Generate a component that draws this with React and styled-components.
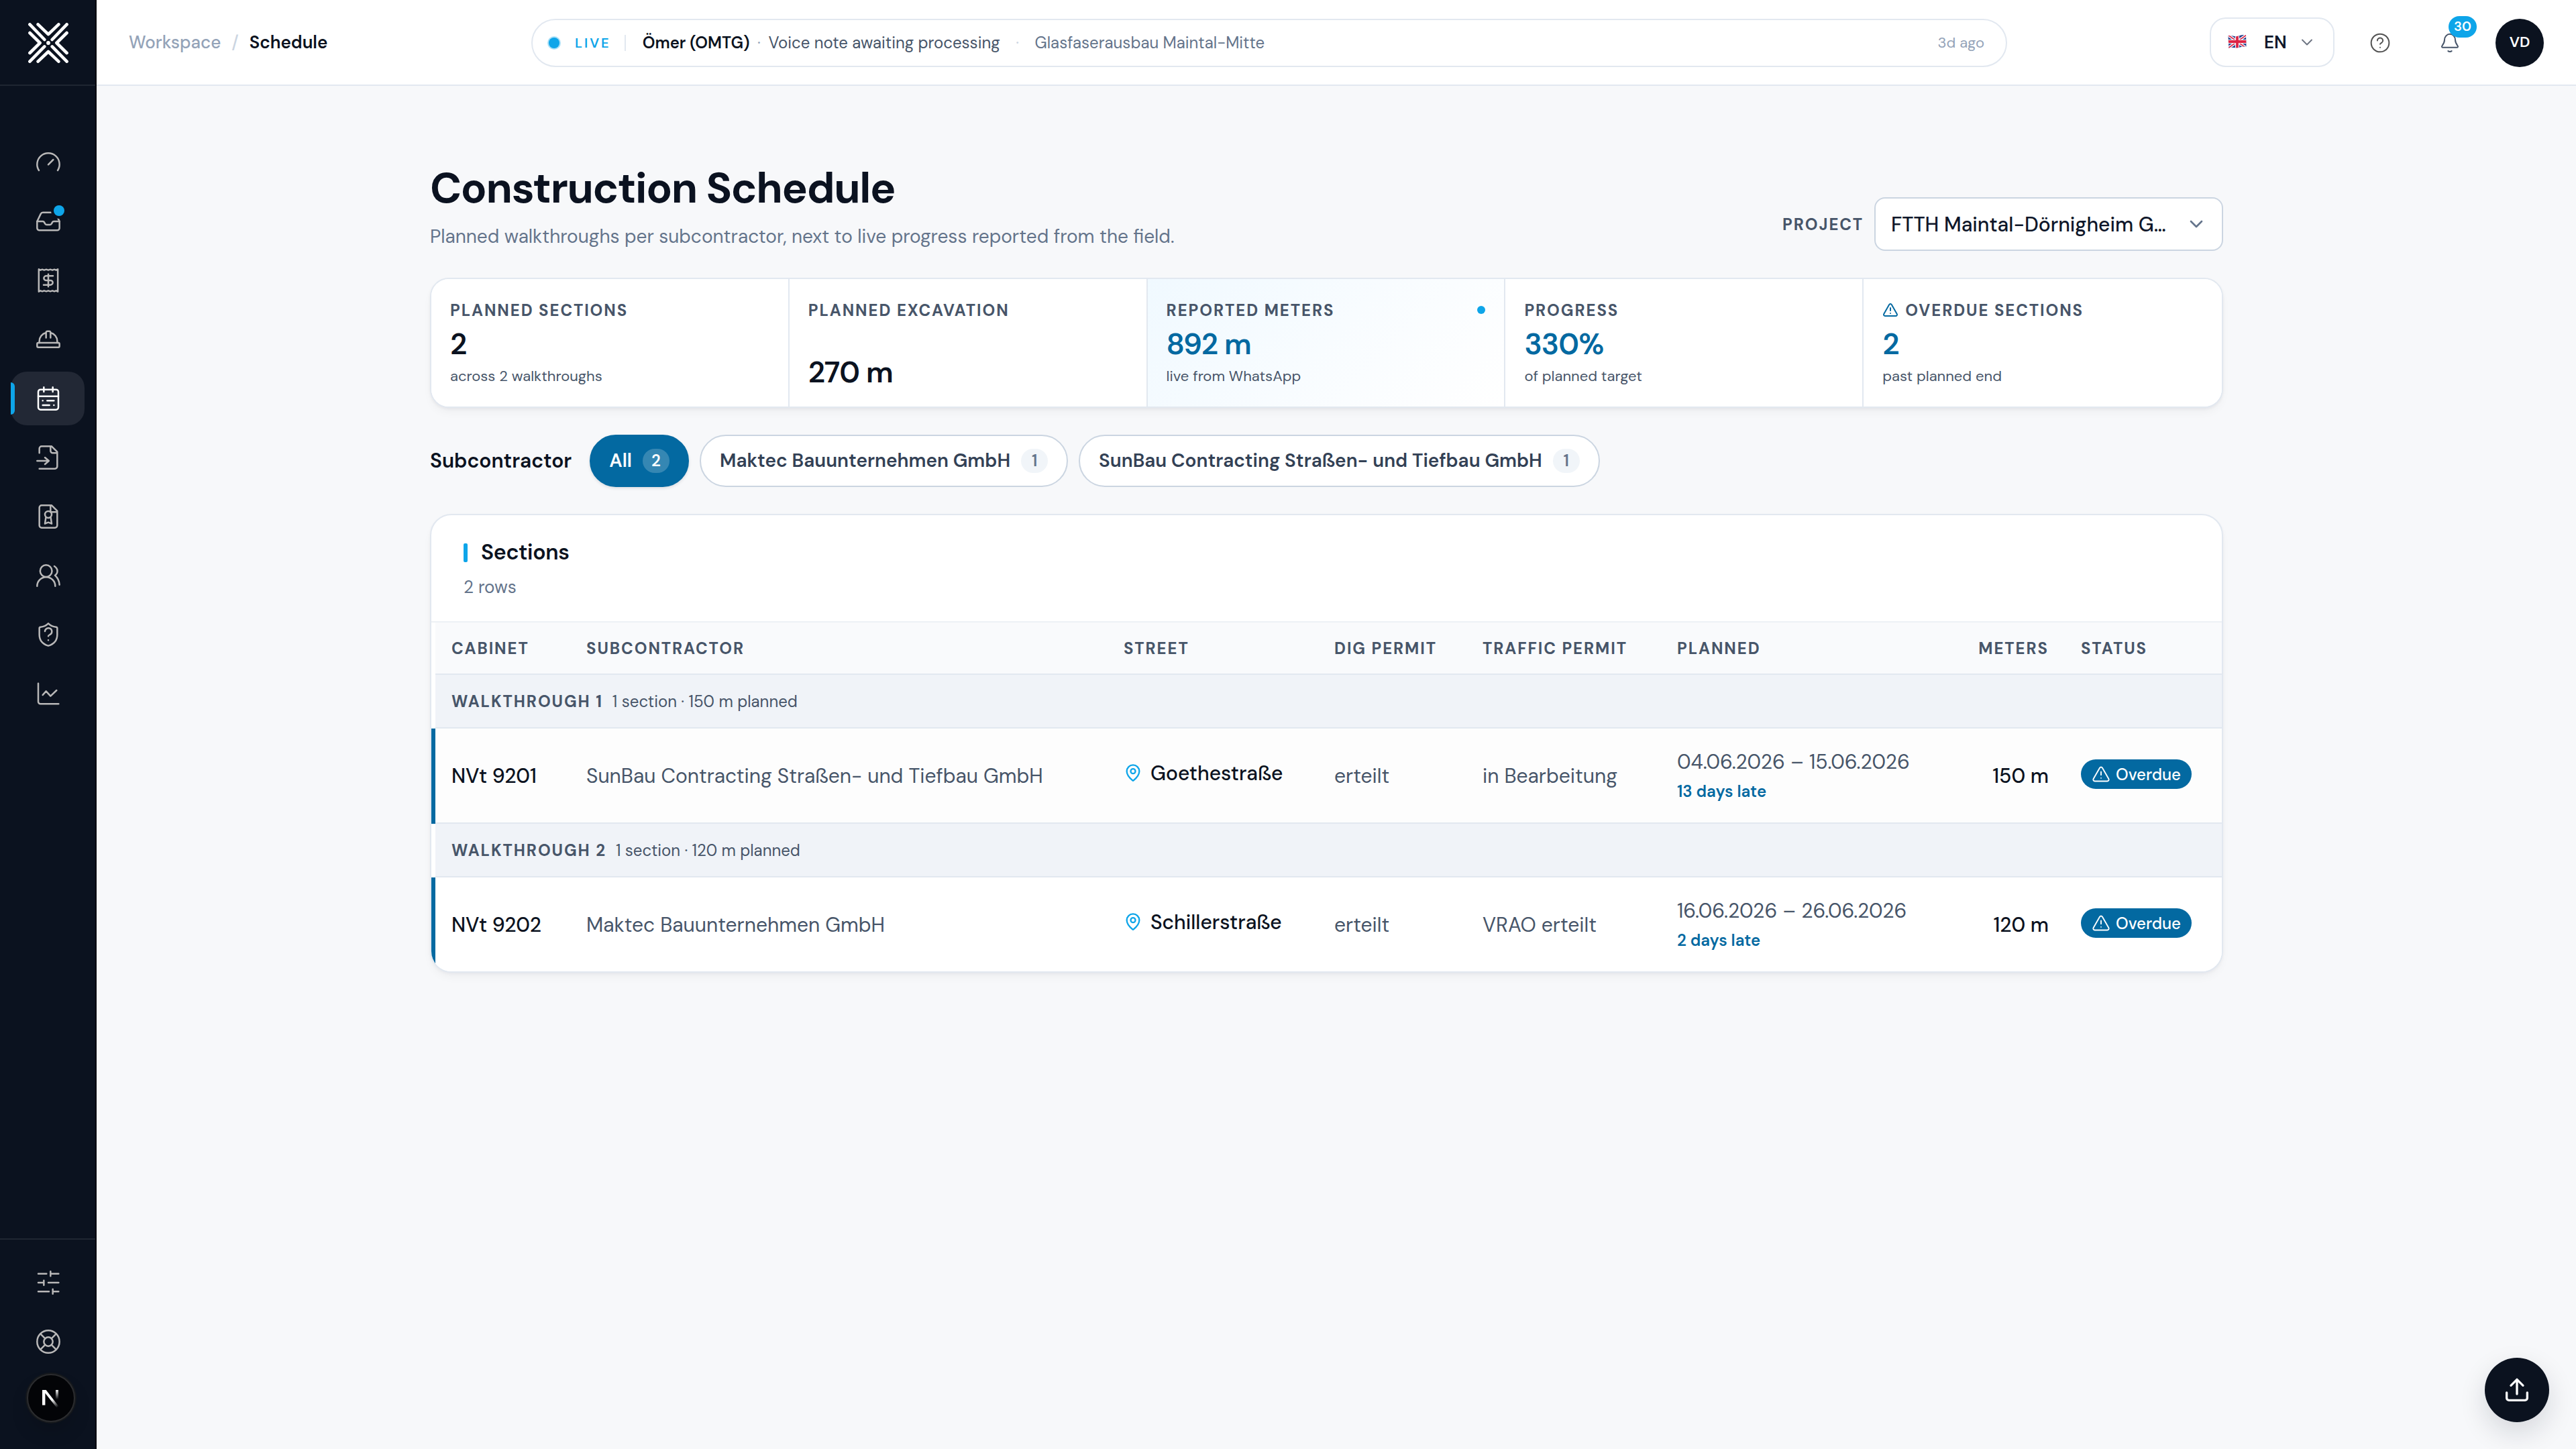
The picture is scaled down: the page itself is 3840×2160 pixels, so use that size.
import styled, { createGlobalStyle } from "styled-components"
import { ChevronDown, MapPin, TriangleAlert } from "lucide-react"

const GlobalStyle = createGlobalStyle`
	*, *::before, *::after {
		box-sizing: border-box;
	}

	body {
		margin: 0;
		background-color: #f7f8fa;
		color: #0b1220;
		font-family: "DM Sans", Inter, "Open Sans", sans-serif;
		-webkit-font-smoothing: antialiased;
	}

	h1, h2, p {
		margin: 0;
	}
`

const Layout = styled.div`
	display: flex;
	height: 100vh;
	overflow: hidden;
`

/* ---------- sidebar ---------- */

const Sidebar = styled.aside`
	display: flex;
	flex-direction: column;
	flex: none;
	width: 144px;
	background-color: #0b121f;
	border-right: 2px solid #04070d;
`

const LogoBox = styled.div`
	display: flex;
	justify-content: center;
	align-items: center;
	height: 128px;
	padding: 2px 0 0 2px;
	border-bottom: 2px solid #1f2632;
`

const Nav = styled.nav`
	display: flex;
	flex-direction: column;
	flex: 1;
	gap: 8px;
	padding: 74px 16px 0;
`

const NavFooter = styled.div`
	display: flex;
	flex-direction: column;
	gap: 8px;
	height: 314px;
	padding: 24px 16px 0;
	border-top: 2px solid #1f2632;
`

const NavItem = styled.a`
	position: relative;
	display: flex;
	justify-content: center;
	align-items: center;
	height: 80px;
	padding-left: 2px;
	border-radius: 24px;
	color: ${({ $active }) => ($active ? "#ffffff" : "#b9b8b8")};
	background-color: ${({ $active }) => ($active ? "#222835" : "transparent")};
`

const ActiveBar = styled.span`
	position: absolute;
	left: 0;
	top: 16px;
	width: 6px;
	height: 48px;
	border-radius: 0 6px 6px 0;
	background-color: #0ea5e9;
`

const UnreadDot = styled.span`
	position: absolute;
	right: 30px;
	top: 16px;
	width: 16px;
	height: 16px;
	border-radius: 50%;
	background-color: #0ea5e9;
	box-shadow: 0 0 0 4px #0b121f;
`

const DevBadge = styled.div`
	position: fixed;
	left: 40px;
	bottom: 40px;
	display: flex;
	justify-content: center;
	align-items: center;
	width: 72px;
	height: 72px;
	border-radius: 50%;
	border: 2px solid #2b2c2f;
	background-color: #030407;
	box-shadow: 0 0 0 2px #15181c, 0 16px 32px -8px rgba(0, 0, 0, 0.24);
`

/* ---------- top bar ---------- */

const Page = styled.div`
	display: flex;
	flex-direction: column;
	flex: 1;
	min-width: 0;
`

const TopBar = styled.header`
	display: grid;
	grid-template-columns: 648px 2200px 1fr;
	align-items: center;
	height: 128px;
	background-color: #ffffff;
	box-shadow: inset 0 -2px 0 #e2e8f0;
`

const Breadcrumb = styled.div`
	display: flex;
	gap: 16px;
	padding: 0 0 2px 48px;
	font-size: 26px;
	font-weight: 500;
	color: #94a3b8;
`

const Slash = styled.span`
	color: #cbd5e1;
`

const Current = styled.span`
	font-weight: 600;
	color: #0b1220;
`

const LivePill = styled.div`
	display: flex;
	align-items: center;
	height: 72px;
	padding: 0 32px 1px 24px;
	border: 2px solid #e2e8f0;
	border-radius: 36px;
	font-size: 24px;
	color: #475569;
`

const LiveDot = styled.span`
	width: 16px;
	height: 16px;
	border-radius: 50%;
	background-color: #0ea5e9;
	box-shadow: 0 0 0 2px rgba(14, 165, 233, 0.35);
`

const LiveLabel = styled.span`
	margin: 0 20px 0 23px;
	font-size: 20px;
	font-weight: 600;
	letter-spacing: 3px;
	color: #0ea5e9;
`

const Separator = styled.span`
	width: 2px;
	height: 24px;
	margin-right: 25px;
	background-color: #e2e8f0;
`

const Author = styled.span`
	font-weight: 600;
	color: #0b1220;
`

const Middot = styled.span`
	width: 6px;
	margin: 0 ${({ $gap }) => $gap}px;
	display: flex;
	justify-content: center;
	color: ${({ $light }) => ($light ? "#cbd5e1" : "#94a3b8")};
`

const Muted = styled.span`
	color: #64748b;
`

const Ago = styled.span`
	margin-left: auto;
	font-size: 22px;
	color: #94a3b8;
`

const Actions = styled.div`
	display: flex;
	justify-content: flex-end;
	align-items: center;
	gap: 32px;
	padding-right: 48px;
`

const Language = styled.button`
	display: flex;
	align-items: center;
	width: 186px;
	height: 74px;
	margin: 0 0 2px;
	padding: 0 0 0 25px;
	border: 2px solid #e2e8f0;
	border-radius: 24px;
	background-color: #ffffff;
	font: 600 26px "DM Sans", Inter, sans-serif;
	color: #0f172a;

	span {
		margin: 0 16px 0 26px;
	}
`

const IconButton = styled.div`
	position: relative;
	display: flex;
	justify-content: center;
	align-items: center;
	width: 72px;
	height: 72px;
	color: ${({ $color }) => $color};
`

const CountBadge = styled.span`
	position: absolute;
	left: 34px;
	top: -4px;
	display: flex;
	justify-content: center;
	align-items: center;
	width: 42px;
	height: 32px;
	padding-bottom: 2px;
	border-radius: 16px;
	background-color: #0ea5e9;
	font-size: 20px;
	font-weight: 600;
	color: #ffffff;
`

const Avatar = styled.div`
	display: flex;
	justify-content: center;
	align-items: center;
	width: 72px;
	height: 72px;
	padding-bottom: 3px;
	border-radius: 50%;
	background-color: #0b121f;
	font-size: 22px;
	font-weight: 600;
	color: #ffffff;
`

/* ---------- content ---------- */

const Content = styled.main`
	display: flex;
	flex-direction: column;
	gap: 40px;
	width: 2673px;
	margin: 114px 0 0 497px;
`

const PageHeader = styled.div`
	display: flex;
	justify-content: space-between;
	align-items: flex-end;
	height: 132px;
`

const Heading = styled.div`
	display: flex;
	flex-direction: column;
	align-self: flex-start;
	gap: 13px;
	padding-top: 1px;
`

const Title = styled.h1`
	font-size: 64px;
	font-weight: 700;
	line-height: 76px;
	letter-spacing: -0.0215em;
`

const Subtitle = styled.p`
	font-size: 28px;
	line-height: 41px;
	color: #64748b;
`

const ProjectPicker = styled.div`
	display: flex;
	align-items: center;
	gap: 16px;
`

const Caps = styled.span`
	font-size: 24px;
	font-weight: 700;
	letter-spacing: 0.08em;
	text-transform: uppercase;
	color: #475569;
`

const Select = styled.div`
	display: flex;
	justify-content: space-between;
	align-items: center;
	width: 520px;
	height: 80px;
	padding: 0 22px 0 23px;
	border: 2px solid #cbd5e1;
	border-radius: 16px;
	background-color: #ffffff;
	font-size: 30px;
	font-weight: 500;
	white-space: nowrap;
	color: #0f172a;

	svg {
		color: #64748b;
	}
`

const Stats = styled.section`
	display: grid;
	grid-template-columns: repeat(5, 1fr);
	height: 194px;
	border: 2px solid #e2e8f0;
	border-radius: 28px;
	background-color: #ffffff;
	overflow: hidden;
	box-shadow: 0 2px 4px rgba(15, 23, 42, 0.05), 0 8px 16px -4px rgba(15, 23, 42, 0.05);
`

const Stat = styled.div`
	display: flex;
	flex-direction: column;
	justify-content: space-between;
	padding: 28px;
	border-right: 2px solid #e2e8f0;
	background: ${({ $live }) => ($live ? "linear-gradient(135deg, #f0f9ff 0%, #f8fcff 50%, #ffffff 100%)" : "#ffffff")};

	&:last-child {
		border-right: none;
	}
`

const StatLabel = styled.div`
	display: flex;
	align-items: center;
	gap: 10px;
	height: 36px;
	color: #0369a1;
`

const StatDot = styled.span`
	width: 12px;
	height: 12px;
	margin-left: auto;
	border-radius: 50%;
	background-color: #0ea5e9;
`

const StatValue = styled.div`
	font-size: 44px;
	font-weight: 600;
	line-height: 46px;
	letter-spacing: -0.02em;
	color: ${({ $accent }) => ($accent ? "#0369a1" : "#0b1220")};
`

const StatHint = styled.div`
	margin-top: 8px;
	font-size: 22px;
	line-height: 34px;
	color: #475569;
`

const Filters = styled.div`
	display: flex;
	align-items: center;
	gap: 16px;
	height: 78px;
`

const FilterLabel = styled.span`
	margin-right: 11px;
	padding-bottom: 1px;
	font-size: 30px;
	font-weight: 600;
`

const Chip = styled.button`
	display: flex;
	align-items: center;
	gap: 16px;
	height: 78px;
	padding: 0 ${({ $selected }) => ($selected ? 27 : 28)}px 1px;
	border: 2px solid ${({ $selected }) => ($selected ? "#0369a1" : "#cbd5e1")};
	border-radius: 39px;
	background-color: ${({ $selected }) => ($selected ? "#0369a1" : "#ffffff")};
	font: 600 28px "DM Sans", Inter, sans-serif;
	color: ${({ $selected }) => ($selected ? "#ffffff" : "#334155")};
	box-shadow: ${({ $selected }) => ($selected ? "0 2px 4px rgba(15, 23, 42, 0.12)" : "none")};
`

const ChipCount = styled.span`
	display: flex;
	justify-content: center;
	align-items: center;
	min-width: 40px;
	height: 36px;
	border-radius: 18px;
	background-color: ${({ $selected }) => ($selected ? "rgba(255, 255, 255, 0.2)" : "#f1f5f9")};
	font-size: 24px;
	font-weight: 600;
	color: ${({ $selected }) => ($selected ? "#ffffff" : "#64748b")};
`

/* ---------- table ---------- */

const Card = styled.section`
	border: 2px solid #e2e8f0;
	border-radius: 32px;
	background-color: #ffffff;
	overflow: hidden;
	box-shadow: 0 2px 4px rgba(15, 23, 42, 0.04), 0 8px 16px -4px rgba(15, 23, 42, 0.05);
`

const CardHeader = styled.div`
	display: flex;
	flex-direction: column;
	gap: 13px;
	height: 160px;
	padding: 36px 48px 0;
	border-bottom: 2px solid #edf1f5;
`

const CardTitle = styled.h2`
	display: flex;
	align-items: center;
	gap: 20px;
	font-size: 32px;
	font-weight: 600;
	line-height: 39px;
	letter-spacing: -0.01em;

	&::before {
		content: "";
		width: 6px;
		height: 28px;
		border-radius: 2px;
		background-color: #0ea5e9;
	}
`

const RowCount = styled.p`
	font-size: 26px;
	line-height: 38px;
	color: #64748b;
`

const Row = styled.div`
	display: grid;
	grid-template-columns: 201px 801px 314px 221px 290px 400px 202px 1fr;
	height: ${({ $height }) => $height}px;
	border-left: 6px solid ${({ $late }) => ($late ? "#0369a1" : "#ffffff")};
	background-color: ${({ $bg }) => $bg};
	box-shadow: ${({ $last }) => ($last ? "none" : "inset 0 -2px 0 #e2e8f0")};
	background-clip: padding-box;
`

const Cell = styled.div`
	display: flex;
	align-items: center;
	justify-content: ${({ $right }) => ($right ? "flex-end" : "flex-start")};
	gap: 12px;
	padding: 0 24px ${({ $lift }) => $lift || 0}px;
	font-size: 30px;
	font-weight: ${({ $strong }) => ($strong ? 500 : 400)};
	white-space: nowrap;
	color: ${({ $strong }) => ($strong ? "#0b1220" : "#475569")};
`

const GroupRow = styled.div`
	display: flex;
	align-items: center;
	gap: 14px;
	height: 80px;
	padding: 0 24px 2px;
	border-left: 6px solid #ffffff;
	background-color: #f0f3f8;
	background-clip: padding-box;
	box-shadow: inset 0 -2px 0 #e2e8f0;
	font-size: 24px;
	color: #475569;
`

const Dates = styled.div`
	display: flex;
	flex-direction: column;
	gap: 4px;
	line-height: 44px;
`

const Late = styled.span`
	font-size: 24px;
	font-weight: 600;
	line-height: 36px;
	color: #0369a1;
`

const StatusPill = styled.span`
	display: flex;
	align-items: center;
	gap: 8px;
	height: 44px;
	padding: 0 16px;
	border-radius: 22px;
	background-color: #0369a1;
	font-size: 24px;
	font-weight: 500;
	color: #ffffff;
`

const UploadButton = styled.button`
	position: fixed;
	right: 40px;
	bottom: 40px;
	display: flex;
	justify-content: center;
	align-items: center;
	width: 96px;
	height: 96px;
	border: none;
	border-radius: 50%;
	background-color: #0b121f;
	color: #ffffff;
	box-shadow: 0 16px 40px rgba(15, 23, 42, 0.14);
`

const icons = {
	gauge: ["M3.6 19.2A10 10 0 1 1 20.4 19.2", "M12 14L16.4 9.6"],
	inbox: [
		"M2 12L5.3 5.2A2 2 0 0 1 7.1 4H16.9A2 2 0 0 1 18.7 5.2L22 12V18A2 2 0 0 1 20 20H4A2 2 0 0 1 2 18Z",
		"M2 12H7C7.8 12 8.2 12.4 8.5 13L9 14C9.3 14.7 9.8 15 10.5 15H13.5C14.2 15 14.7 14.7 15 14L15.5 13C15.8 12.4 16.2 12 17 12H22",
	],
	receipt: [
		"M3.5 2V22L5 21.2L6.6 21.8L8.3 21.2L10.2 21.8L12 21.2L13.8 21.8L15.7 21.2L17.4 21.8L19 21.2L20.5 22V2L19 2.8L17.4 2.2L15.7 2.8L13.8 2.2L12 2.8L10.2 2.2L8.3 2.8L6.6 2.2L5 2.8Z",
		"M16.2 8H10.2A2.2 2 0 0 0 10.2 12H13.9A2.1 2 0 0 1 13.9 16H7.8M12 6.5V17.5",
	],
	helmet: [
		"M3 15H21A1 1 0 0 1 22 16V18A1 1 0 0 1 21 19H3A1 1 0 0 1 2 18V16A1 1 0 0 1 3 15Z",
		"M4 15V13.5A8 7.8 0 0 1 10 6M20 15V13.5A8 7.8 0 0 0 14 6",
		"M10 10.5V5.8A1.2 1.2 0 0 1 11.2 4.7H12.8A1.2 1.2 0 0 1 14 5.8V10.5",
	],
	calendar: [
		"M5 4H19A2 2 0 0 1 21 6V20A2 2 0 0 1 19 22H5A2 2 0 0 1 3 20V6A2 2 0 0 1 5 4Z",
		"M3 10H21M8 2V6M16 2V6M7 14H7.01M11 14H17M7 18H13M17 18H17.01",
	],
	fileImport: [
		"M4 8V4A2 2 0 0 1 6 2H15L20 7V20A2 2 0 0 1 18 22H4",
		"M14 2.5V6A2 2 0 0 0 16 8H19.5",
		"M2 15H12.5M9 12L12.5 15L9 18",
	],
	certificate: [
		"M15 2H6A2 2 0 0 0 4 4V20A2 2 0 0 0 6 22H18A2 2 0 0 0 20 20V7Z",
		"M14 2.5V8H19.5",
		"M12 7.2A3 3 0 1 1 12 13.2A3 3 0 1 1 12 7.2Z",
		"M9.8 13L9 18.4L12 17.2L15 18.4L14.2 13",
	],
	users: [
		"M10 2.6A5.3 5.3 0 1 1 10 13.2A5.3 5.3 0 1 1 10 2.6Z",
		"M2 21.4A8.1 8.1 0 0 1 18.2 21.4",
		"M17.4 3.6C20.8 5.8 21 9.6 18 11.8C20.4 14 21.8 16.8 22 20.2",
	],
	shield: [
		"M12 2C14 4 16.5 5 19 5.2C19.7 5.3 20 5.7 20 6.2V12C20 17 17 20.5 12 22C7 20.5 4 17 4 12V6.2C4 5.7 4.3 5.3 5 5.2C7.5 5 10 4 12 2Z",
		"M9 9A3.1 3.1 0 1 1 13.8 11.8C12.8 12.4 12 12.8 12 13.4M12 17H12.01",
	],
	chart: ["M3 2.8V19.2A2 2 0 0 0 5 21.2H21.2", "M7 13.2L10 9.8L14 14.2L19.4 9"],
	sliders: ["M3 4H10.4M14 4H21.2M14 2V6.2M3 12H8M8 10V14.2M12 12H21.2M3 20H12.6M16 20H21.2M16 17.8V22"],
	lifebuoy: [
		"M12 2A10 10 0 1 1 12 22A10 10 0 1 1 12 2Z",
		"M12 8A4 4 0 1 1 12 16A4 4 0 1 1 12 8Z",
		"M5 5L9.2 9.2M19 5L14.8 9.2M5 19L9.2 14.8M19 19L14.8 14.8",
	],
	help: [
		"M12 2A10 10 0 1 1 12 22A10 10 0 1 1 12 2Z",
		"M8.9 9.3A3.1 2.9 0 1 1 13.9 11.6C12.8 12.3 12 12.7 12 13.4M12 17H12.01",
	],
	bell: [
		"M3.3 15.2C4.9 13.2 6 11.6 6 8.7A6 6.6 0 0 1 18 8.7C18 11.6 19.1 13.2 20.7 15.2C21.4 16.2 20.9 17 19.8 17H4.2C3.1 17 2.6 16.2 3.3 15.2Z",
		"M10 21C11 22.1 13 22.1 14 21",
	],
	upload: ["M12 2.6V15.6M6.6 8L12 2.6L17.4 8", "M2.8 14.4V19.2A2 2 0 0 0 4.8 21.2H19.2A2 2 0 0 0 21.2 19.2V14.4"],
}

const Icon = ({ name, size = 40, stroke = 1.5 }) => (
	<svg
		width={size}
		height={size}
		viewBox="0 0 24 24"
		fill="none"
		stroke="currentColor"
		strokeWidth={stroke}
		strokeLinecap="round"
		strokeLinejoin="round"
	>
		{icons[name].map(d => (
			<path key={d} d={d} />
		))}
	</svg>
)

const Logo = () => (
	<svg width="60" height="60" viewBox="0 0 60 60" fill="none" stroke="#ffffff" strokeWidth="4.6" strokeLinecap="round" strokeLinejoin="round">
		<path d="M2.4 2.4L24.3 25M57.6 2.4L35.7 25M2.4 57.6L24.3 35.4M57.6 57.6L35.7 35.4" />
		<path d="M14.6 2.4L30 17.2L45.4 2.4M14.6 57.6L30 43L45.4 57.6" />
		<path d="M2.4 15L17.6 30L2.4 45M57.6 15L42.4 30L57.6 45" />
		<circle cx="30" cy="30" r="2.9" fill="#ffffff" stroke="none" />
	</svg>
)

const DevLogo = () => (
	<svg width="26" height="30" viewBox="0 0 26 30" fill="none">
		<defs>
			<linearGradient id="diagonal" gradientUnits="userSpaceOnUse" x1="15" y1="17" x2="24" y2="28">
				<stop stopColor="#ffffff" />
				<stop offset="1" stopColor="#ffffff" stopOpacity="0" />
			</linearGradient>
			<linearGradient id="stem" gradientUnits="userSpaceOnUse" x1="0" y1="2" x2="0" y2="17">
				<stop stopColor="#ffffff" />
				<stop offset="1" stopColor="#ffffff" stopOpacity="0" />
			</linearGradient>
		</defs>
		<rect x="0" y="3" width="4.4" height="22.6" fill="#ffffff" />
		<path d="M0.5 3H5.6L25 28L22 30Z" fill="url(#diagonal)" />
		<rect x="20" y="3" width="4" height="16" fill="url(#stem)" />
	</svg>
)

const Flag = () => (
	<svg width="28" height="22" viewBox="0 0 28 22">
		<defs>
			<clipPath id="wave">
				<path d="M0.5 1.5C5 -0.2 9 3 14 2C19 1 23 -0.8 27 0.2L27.5 17.4C23 16.6 19 18.4 14.4 19.2C9.5 20 5.6 17.6 1.4 19.8Z" />
			</clipPath>
		</defs>
		<g clipPath="url(#wave)">
			<rect width="28" height="22" fill="#233f8c" />
			<path d="M0 0L28 20M28 0L0 20" stroke="#f4f3f6" strokeWidth="4.4" />
			<path d="M0 0L28 20M28 0L0 20" stroke="#dd2444" strokeWidth="1.6" />
			<path d="M14 0V22M0 10H28" stroke="#f4f3f6" strokeWidth="6.2" />
			<path d="M14 0V22M0 10H28" stroke="#dd2444" strokeWidth="3.8" />
		</g>
	</svg>
)

const navItems = [
	{ icon: "gauge" },
	{ icon: "inbox", unread: true },
	{ icon: "receipt" },
	{ icon: "helmet" },
	{ icon: "calendar", active: true },
	{ icon: "fileImport" },
	{ icon: "certificate" },
	{ icon: "users" },
	{ icon: "shield" },
	{ icon: "chart" },
]

const stats = [
	{ label: "Planned sections", value: "2", hint: "across 2 walkthroughs" },
	{ label: "Planned excavation", value: "270 m" },
	{ label: "Reported meters", value: "892 m", hint: "live from WhatsApp", accent: true, live: true },
	{ label: "Progress", value: "330%", hint: "of planned target", accent: true },
	{ label: "Overdue sections", value: "2", hint: "past planned end", accent: true, warn: true },
]

const subcontractors = [
	{ name: "All", count: 2, selected: true },
	{ name: "Maktec Bauunternehmen GmbH", count: 1 },
	{ name: "SunBau Contracting Straßen- und Tiefbau GmbH", count: 1 },
]

const columns = ["Cabinet", "Subcontractor", "Street", "Dig permit", "Traffic permit", "Planned", "Meters", "Status"]

const walkthroughs = [
	{
		title: "Walkthrough 1",
		summary: "1 section · 150 m planned",
		bg: "#fdfdfd",
		cabinet: "NVt 9201",
		subcontractor: "SunBau Contracting Straßen- und Tiefbau GmbH",
		street: "Goethestraße",
		dig: "erteilt",
		traffic: "in Bearbeitung",
		planned: "04.06.2026 – 15.06.2026",
		late: "13 days late",
		meters: "150 m",
	},
	{
		title: "Walkthrough 2",
		summary: "1 section · 120 m planned",
		bg: "#ffffff",
		cabinet: "NVt 9202",
		subcontractor: "Maktec Bauunternehmen GmbH",
		street: "Schillerstraße",
		dig: "erteilt",
		traffic: "VRAO erteilt",
		planned: "16.06.2026 – 26.06.2026",
		late: "2 days late",
		meters: "120 m",
	},
]

const SideNav = () => (
	<Sidebar>
		<LogoBox>
			<Logo />
		</LogoBox>
		<Nav>
			{navItems.map(item => (
				<NavItem key={item.icon} $active={item.active}>
					{item.active && <ActiveBar />}
					<Icon name={item.icon} />
					{item.unread && <UnreadDot />}
				</NavItem>
			))}
		</Nav>
		<NavFooter>
			<NavItem>
				<Icon name="sliders" />
			</NavItem>
			<NavItem>
				<Icon name="lifebuoy" />
			</NavItem>
		</NavFooter>
		<DevBadge>
			<DevLogo />
		</DevBadge>
	</Sidebar>
)

const Header = () => (
	<TopBar>
		<Breadcrumb>
			<span>Workspace</span>
			<Slash>/</Slash>
			<Current>Schedule</Current>
		</Breadcrumb>
		<LivePill>
			<LiveDot />
			<LiveLabel>LIVE</LiveLabel>
			<Separator />
			<Author>Ömer (OMTG)</Author>
			<Middot $gap={11}>·</Middot>
			<span>Voice note awaiting processing</span>
			<Middot $gap={23} $light>·</Middot>
			<Muted>Glasfaserausbau Maintal-Mitte</Muted>
			<Ago>3d ago</Ago>
		</LivePill>
		<Actions>
			<Language>
				<Flag />
				<span>EN</span>
				<ChevronDown size={28} strokeWidth={1.6} color="#6b7280" />
			</Language>
			<IconButton $color="#525252">
				<Icon name="help" size={32} />
			</IconButton>
			<IconButton $color="#475569">
				<Icon name="bell" size={32} />
				<CountBadge>30</CountBadge>
			</IconButton>
			<Avatar>VD</Avatar>
		</Actions>
	</TopBar>
)

const SectionRow = ({ item, last }) => {
	// every row but the last keeps 2px at the bottom for its divider
	const line = last ? 0 : 2

	return (
		<>
			<GroupRow>
				<Caps>{item.title}</Caps>
				<span>{item.summary}</span>
			</GroupRow>
			<Row $height={140 + line} $late $bg={item.bg} $last={last}>
				<Cell $strong $lift={line}>{item.cabinet}</Cell>
				<Cell $lift={line}>{item.subcontractor}</Cell>
				<Cell $strong $lift={line + 8}>
					<MapPin size={28} color="#0ea5e9" />
					{item.street}
				</Cell>
				<Cell $lift={line}>{item.dig}</Cell>
				<Cell $lift={line}>{item.traffic}</Cell>
				<Cell $lift={line}>
					<Dates>
						{item.planned}
						<Late>{item.late}</Late>
					</Dates>
				</Cell>
				<Cell $strong $right $lift={line}>{item.meters}</Cell>
				<Cell $lift={line + 4}>
					<StatusPill>
						<TriangleAlert size={28} strokeWidth={1.6} />
						Overdue
					</StatusPill>
				</Cell>
			</Row>
		</>
	)
}

export default function App() {
	return (
		<>
			<GlobalStyle />
			<Layout>
				<SideNav />
				<Page>
					<Header />
					<Content>
						<PageHeader>
							<Heading>
								<Title>Construction Schedule</Title>
								<Subtitle>Planned walkthroughs per subcontractor, next to live progress reported from the field.</Subtitle>
							</Heading>
							<ProjectPicker>
								<Caps>Project</Caps>
								<Select>
									FTTH Maintal-Dörnigheim G…
									<ChevronDown size={32} />
								</Select>
							</ProjectPicker>
						</PageHeader>
						<Stats>
							{stats.map(stat => (
								<Stat key={stat.label} $live={stat.live}>
									<StatLabel>
										{stat.warn && <TriangleAlert size={24} />}
										<Caps>{stat.label}</Caps>
										{stat.live && <StatDot />}
									</StatLabel>
									<div>
										<StatValue $accent={stat.accent}>{stat.value}</StatValue>
										{stat.hint && <StatHint>{stat.hint}</StatHint>}
									</div>
								</Stat>
							))}
						</Stats>
						<Filters>
							<FilterLabel>Subcontractor</FilterLabel>
							{subcontractors.map(({ name, count, selected }) => (
								<Chip key={name} $selected={selected}>
									{name}
									<ChipCount $selected={selected}>{count}</ChipCount>
								</Chip>
							))}
						</Filters>
						<Card>
							<CardHeader>
								<CardTitle>Sections</CardTitle>
								<RowCount>2 rows</RowCount>
							</CardHeader>
							<Row $height={78} $bg="#f9fafc">
								{columns.map(name => (
									<Cell key={name} $right={name === "Meters"} $lift={2}>
										<Caps>{name}</Caps>
									</Cell>
								))}
							</Row>
							{walkthroughs.map((item, i) => (
								<SectionRow key={item.title} item={item} last={i === walkthroughs.length - 1} />
							))}
						</Card>
					</Content>
				</Page>
			</Layout>
			<UploadButton>
				<Icon name="upload" stroke={2} />
			</UploadButton>
		</>
	)
}
